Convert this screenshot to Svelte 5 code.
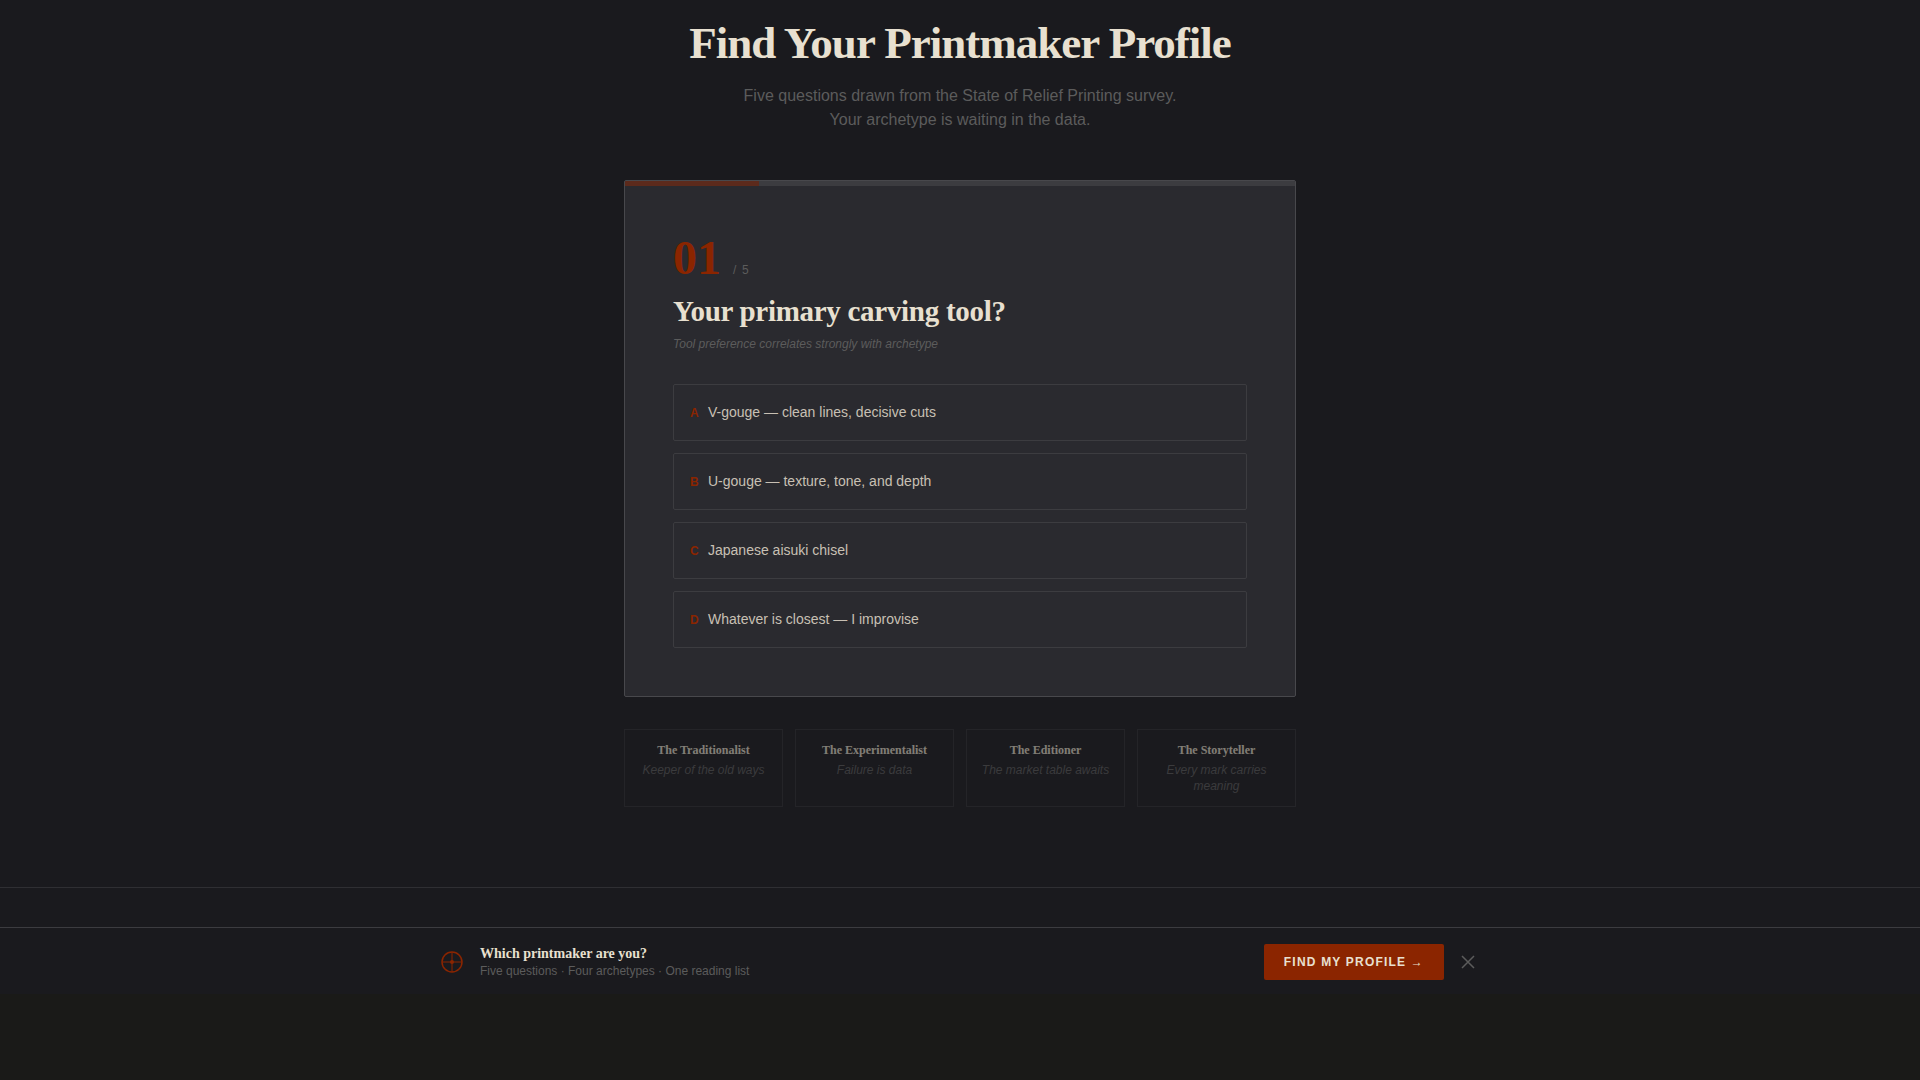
<script>
    const options = [
        { key: "A", text: "V-gouge — clean lines, decisive cuts" },
        { key: "B", text: "U-gouge — texture, tone, and depth" },
        { key: "C", text: "Japanese aisuki chisel" },
        { key: "D", text: "Whatever is closest — I improvise" },
    ];

    const archetypes = [
        { name: "The Traditionalist", tagline: "Keeper of the old ways" },
        { name: "The Experimentalist", tagline: "Failure is data" },
        { name: "The Editioner", tagline: "The market table awaits" },
        { name: "The Storyteller", tagline: "Every mark carries meaning" },
    ];

    const total = 5;
    let step = $state(1);
    let showBanner = $state(true);

    let progress = $derived((step / total) * 100);

    function next() {
        if (step < total) step += 1;
    }
</script>

<section class="quiz">
    <header class="intro">
        <h1>Find Your Printmaker Profile</h1>
        <p>Five questions drawn from the State of Relief Printing survey.<br />Your archetype is waiting in the data.</p>
    </header>

    <div class="card">
        <div class="progress">
            <div class="progress-fill" style="width: {progress}%"></div>
        </div>
        <div class="question">
            <div class="counter">
                <span class="number">{String(step).padStart(2, "0")}</span>
                <span class="total">/ {total}</span>
            </div>
            <h2>Your primary carving tool?</h2>
            <p class="hint">Tool preference correlates strongly with archetype</p>
            <div class="options">
                {#each options as option}
                    <button class="option" onclick={next}>
                        <span class="key">{option.key}</span>
                        <span>{option.text}</span>
                    </button>
                {/each}
            </div>
        </div>
    </div>

    <div class="archetypes">
        {#each archetypes as archetype}
            <div class="archetype">
                <h3>{archetype.name}</h3>
                <p>{archetype.tagline}</p>
            </div>
        {/each}
    </div>
</section>

<div class="spacer"></div>

{#if showBanner}
    <aside class="banner">
        <div class="banner-inner">
            <svg class="mark" viewBox="0 0 24 24" width="24" height="24" fill="none" stroke="currentColor" aria-hidden="true">
                <circle cx="12" cy="12" r="10" stroke-width="1.5" />
                <path d="M12 2v20M2 12h20" stroke-width="1" />
                <circle cx="12" cy="12" r="2" fill="currentColor" stroke="none" />
            </svg>
            <div class="banner-text">
                <strong>Which printmaker are you?</strong>
                <span>Five questions · Four archetypes · One reading list</span>
            </div>
            <div class="actions">
                <button class="cta">Find my profile →</button>
                <button class="close" aria-label="Dismiss" onclick={() => (showBanner = false)}>
                    <svg viewBox="0 0 16 16" width="16" height="16" fill="none" stroke="currentColor" stroke-width="1.5">
                        <path d="M2 2l12 12M14 2L2 14" />
                    </svg>
                </button>
            </div>
        </div>
    </aside>
{/if}

<style>
    :global(body) {
        margin: 0;
        background: #1a1a18;
        font-family: "Liberation Sans", Arial, sans-serif;
    }

    h1,
    h2,
    h3,
    p {
        margin: 0;
    }

    h1,
    h2,
    h3,
    .number,
    strong {
        font-family: "Liberation Serif", "Times New Roman", serif;
        font-weight: 700;
    }

    button {
        font-family: inherit;
        cursor: pointer;
    }

    .quiz {
        padding: 16px 24px 80px;
        background: #1a1a1e;
        border-bottom: 1px solid #2f2f33;
    }

    .intro {
        margin-bottom: 48px;
        text-align: center;
    }

    h1 {
        margin-bottom: 14px;
        font-size: 45px;
        line-height: 54px;
        letter-spacing: -1px;
        color: #e8e0d0;
    }

    .intro p {
        font-size: 16px;
        line-height: 24px;
        color: #5c5c5c;
    }

    .card,
    .archetypes {
        max-width: 672px;
        margin: 0 auto;
        box-sizing: border-box;
    }

    .card {
        overflow: hidden;
        border: 1px solid #48484c;
        border-radius: 2px;
        background: #2a2a2f;
    }

    .progress {
        height: 5px;
        background: #3c3c40;
    }

    .progress-fill {
        height: 100%;
        background: #5c2a1c;
    }

    .question {
        padding: 48px;
    }

    .counter {
        display: flex;
        align-items: baseline;
        gap: 12px;
        margin-bottom: 12px;
    }

    .number {
        font-size: 48px;
        line-height: 48px;
        color: #8b2500;
    }

    .total {
        font-size: 12px;
        letter-spacing: 0.1em;
        color: #5c5c5c;
    }

    h2 {
        margin-bottom: 8px;
        font-size: 29px;
        line-height: 34px;
        letter-spacing: -0.01em;
        color: #e8e0d0;
    }

    .hint {
        margin-bottom: 32px;
        font-size: 12px;
        line-height: 16px;
        font-style: italic;
        color: #5c5c5c;
    }

    .options {
        display: grid;
        gap: 12px;
    }

    .option {
        display: flex;
        align-items: baseline;
        gap: 8px;
        padding: 16px;
        border: 1px solid #3c3c40;
        border-radius: 2px;
        background: transparent;
        font-size: 14px;
        line-height: 23px;
        text-align: left;
        color: #c8c0b4;
    }

    .key {
        min-width: 10px;
        font-size: 12px;
        font-weight: 700;
        line-height: 16px;
        color: #8b2500;
    }

    .archetypes {
        display: grid;
        grid-template-columns: repeat(4, 1fr);
        gap: 12px;
        margin-top: 32px;
        opacity: 0.5;
    }

    .archetype {
        padding: 12px;
        border: 1px solid #2f2f33;
        text-align: center;
    }

    h3 {
        margin-bottom: 4px;
        font-size: 12px;
        line-height: 16px;
        color: #e8e0d0;
    }

    .archetype p {
        font-size: 12px;
        line-height: 16px;
        font-style: italic;
        color: #5c5c5c;
    }

    .spacer {
        height: 39px;
        background: #1a1a1e;
    }

    .banner {
        padding: 16px 24px 14px;
        border-top: 1px solid #3c3c40;
        background: #1a1a1e;
    }

    .banner-inner {
        display: flex;
        align-items: center;
        gap: 16px;
        max-width: 1040px;
        margin: 0 auto;
    }

    .mark {
        flex: none;
        color: #8b2500;
    }

    .banner-text {
        display: flex;
        flex: 1;
        flex-direction: column;
    }

    strong {
        font-size: 14px;
        line-height: 18px;
        color: #e8e0d0;
    }

    .banner-text span {
        font-size: 12px;
        line-height: 16px;
        color: #5c5c5c;
    }

    .actions {
        display: flex;
        align-items: center;
        gap: 12px;
    }

    .cta {
        padding: 10px 20px;
        border: 0;
        border-radius: 2px;
        background: #8b2500;
        font-size: 12px;
        font-weight: 700;
        line-height: 16px;
        letter-spacing: 0.1em;
        text-transform: uppercase;
        color: #e8e0d0;
    }

    .close {
        display: flex;
        padding: 4px;
        border: 0;
        background: none;
        color: #5c5c5c;
    }
</style>
